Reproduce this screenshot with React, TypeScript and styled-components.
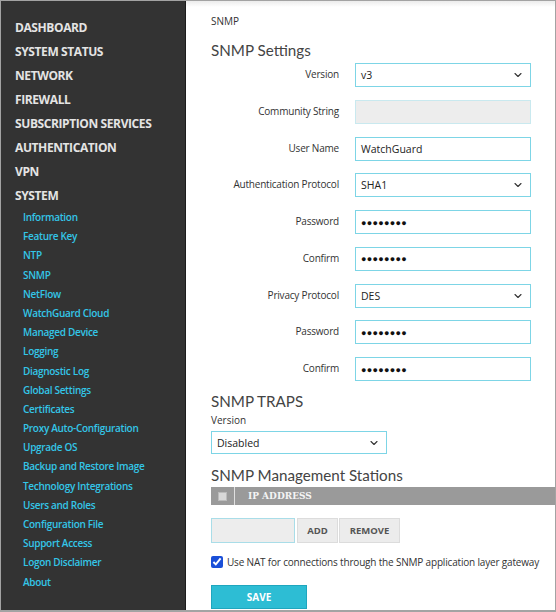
import React from "react";
import styled, { createGlobalStyle } from "styled-components";
import { ChevronDown } from "lucide-react";

const Global = createGlobalStyle`
  html, body { margin: 0; padding: 0; background: #fff; }
  body { font-family: "Open Sans", "Noto Sans", sans-serif; }
  * { box-sizing: border-box; }
`;

const Frame = styled.div`
  width: 556px;
  height: 612px;
  border: 1px solid #a3a3a3;
  border-bottom-width: 2px;
  display: flex;
  overflow: hidden;
  background: #fff;
`;

const Sidebar = styled.nav`
  width: 185px;
  flex: none;
  background: #333333;
  border-right: 1px solid #1c1c1c;
  padding-top: 15px;
`;

const TopItem = styled.div`
  font-family: "Open Sans", sans-serif;
  font-weight: 700;
  font-size: 12px;
  letter-spacing: -0.4px;
  line-height: 24px;
  height: 24px;
  color: #e4e4e4;
  padding-left: 14px;
  white-space: nowrap;
`;

const SubItem = styled.div`
  font-family: "Open Sans", sans-serif;
  font-weight: 600;
  font-size: 10px;
  letter-spacing: -0.3px;
  line-height: 19.2px;
  height: 19.2px;
  color: #33c6e8;
  padding-left: 22px;
  white-space: nowrap;
`;

const Main = styled.main`
  flex: 1;
  min-width: 0;
  padding: 13px 0 0 25px;
  background: linear-gradient(#ececec, #fff 6px);
  color: #333;
`;

const Crumb = styled.div`
  font-size: 10px;
  line-height: 14px;
  color: #333;
`;

const Heading = styled.h2<{ $top: number }>`
  margin: ${(p) => p.$top}px 0 0;
  font-family: "Lato", "Open Sans", sans-serif;
  font-weight: 400;
  font-size: 15.2px;
  line-height: 22px;
  color: #444;
  white-space: nowrap;
`;

const Form = styled.div`
  margin-top: 2px;
  display: grid;
  grid-template-columns: 128px 176px;
  column-gap: 16px;
  row-gap: 12.75px;
`;

const Label = styled.div`
  font-size: 10px;
  letter-spacing: -0.2px;
  line-height: 23px;
  text-align: right;
  color: #333;
  white-space: nowrap;
`;

const Field = styled.div<{ $disabled?: boolean; $w?: number; $h?: number; $top?: number }>`
  height: ${(p) => p.$h ?? 24}px;
  margin-top: ${(p) => p.$top ?? 0}px;
  width: ${(p) => (p.$w ? `${p.$w}px` : "auto")};
  border: 1px solid ${(p) => (p.$disabled ? "#c9e9ef" : "#7dd5e6")};
  background: ${(p) => (p.$disabled ? "#ededed" : "#fff")};
  display: flex;
  align-items: center;
  justify-content: space-between;
  padding: 0 6px 0 5px;
  font-size: 10.5px;
  color: #222;
`;

const Dots = styled.span`
  font-size: 9px;
  letter-spacing: 0.3px;
  color: #111;
`;

const SmallLabel = styled.div`
  font-size: 10px;
  line-height: 16px;
  color: #333;
`;

const TableHead = styled.div`
  margin-top: 1px;
  height: 18px;
  background: #9a9a9a;
  display: flex;
  align-items: stretch;
`;

const CheckCell = styled.div`
  width: 24px;
  border-right: 1px solid #e0e0e0;
  display: flex;
  align-items: center;
  justify-content: center;
`;

const FakeBox = styled.div`
  width: 9px;
  height: 9px;
  background: #d8d8d8;
  border: 1px solid #bbb;
`;

const HeadText = styled.div`
  padding-left: 13px;
  font-family: "DejaVu Serif", serif;
  font-weight: 700;
  font-size: 9px;
  line-height: 18px;
  color: #f4f4f4;
`;

const AddRow = styled.div`
  margin-top: 13px;
  display: flex;
  gap: 2px;
  height: 25px;
`;

const AddInput = styled.div`
  width: 84px;
  border: 1px solid #a9dde8;
  background: #ededed;
`;

const GrayButton = styled.div<{ $w: number; $ml?: number }>`
  width: ${(p) => p.$w}px;
  margin-left: ${(p) => p.$ml ?? 0}px;
  background: #ececec;
  border: 1px solid #dcdcdc;
  display: flex;
  align-items: center;
  justify-content: center;
  font-weight: 700;
  font-size: 9.5px;
  color: #555;
`;

const CheckRow = styled.label`
  margin-top: 12px;
  display: flex;
  align-items: center;
  gap: 4px;
  font-size: 10px;
  letter-spacing: -0.18px;
  color: #333;
  white-space: nowrap;
  input { margin: 0; width: 12px; height: 12px; accent-color: #1a4fd8; }
`;

const SaveButton = styled.div`
  margin-top: 16px;
  width: 96px;
  height: 24px;
  background: #2dbdd4;
  border: 1px solid #1fa6be;
  color: #fff;
  font-weight: 700;
  font-size: 10px;
  display: flex;
  align-items: center;
  justify-content: center;
`;

const Chevron = () => <ChevronDown size={12} strokeWidth={2.2} color="#333" />;

const topItems = [
  "DASHBOARD",
  "SYSTEM STATUS",
  "NETWORK",
  "FIREWALL",
  "SUBSCRIPTION SERVICES",
  "AUTHENTICATION",
  "VPN",
  "SYSTEM",
];

const subItems = [
  "Information",
  "Feature Key",
  "NTP",
  "SNMP",
  "NetFlow",
  "WatchGuard Cloud",
  "Managed Device",
  "Logging",
  "Diagnostic Log",
  "Global Settings",
  "Certificates",
  "Proxy Auto-Configuration",
  "Upgrade OS",
  "Backup and Restore Image",
  "Technology Integrations",
  "Users and Roles",
  "Configuration File",
  "Support Access",
  "Logon Disclaimer",
  "About",
];

type Row = { label: string; kind: "select" | "text" | "pw" | "disabled"; value?: string };

const rows: Row[] = [
  { label: "Version", kind: "select", value: "v3" },
  { label: "Community String", kind: "disabled" },
  { label: "User Name", kind: "text", value: "WatchGuard" },
  { label: "Authentication Protocol", kind: "select", value: "SHA1" },
  { label: "Password", kind: "pw" },
  { label: "Confirm", kind: "pw" },
  { label: "Privacy Protocol", kind: "select", value: "DES" },
  { label: "Password", kind: "pw" },
  { label: "Confirm", kind: "pw" },
];

export default function App() {
  return (
    <>
      <Global />
      <Frame>
        <Sidebar>
          {topItems.map((t) => (
            <TopItem key={t}>{t}</TopItem>
          ))}
          {subItems.map((t) => (
            <SubItem key={t}>{t}</SubItem>
          ))}
        </Sidebar>
        <Main>
          <Crumb>SNMP</Crumb>
          <Heading $top={11}>SNMP Settings</Heading>
          <Form>
            {rows.map((r, i) => (
              <React.Fragment key={i}>
                <Label>{r.label}</Label>
                <Field $disabled={r.kind === "disabled"}>
                  {r.kind === "pw" ? <Dots>●●●●●●●●</Dots> : <span>{r.value}</span>}
                  {r.kind === "select" && <Chevron />}
                </Field>
              </React.Fragment>
            ))}
          </Form>
          <Heading $top={9}>SNMP TRAPS</Heading>
          <SmallLabel>Version</SmallLabel>
          <Field $w={176} $h={23} $top={3}>
            <span>Disabled</span>
            <Chevron />
          </Field>
          <Heading $top={10}>SNMP Management Stations</Heading>
          <TableHead>
            <CheckCell>
              <FakeBox />
            </CheckCell>
            <HeadText>IP ADDRESS</HeadText>
          </TableHead>
          <AddRow>
            <AddInput />
            <GrayButton $w={41}>ADD</GrayButton>
            <GrayButton $w={61} $ml={-1}>REMOVE</GrayButton>
          </AddRow>
          <CheckRow>
            <input type="checkbox" defaultChecked />
            Use NAT for connections through the SNMP application layer gateway
          </CheckRow>
          <SaveButton>SAVE</SaveButton>
        </Main>
      </Frame>
    </>
  );
}
